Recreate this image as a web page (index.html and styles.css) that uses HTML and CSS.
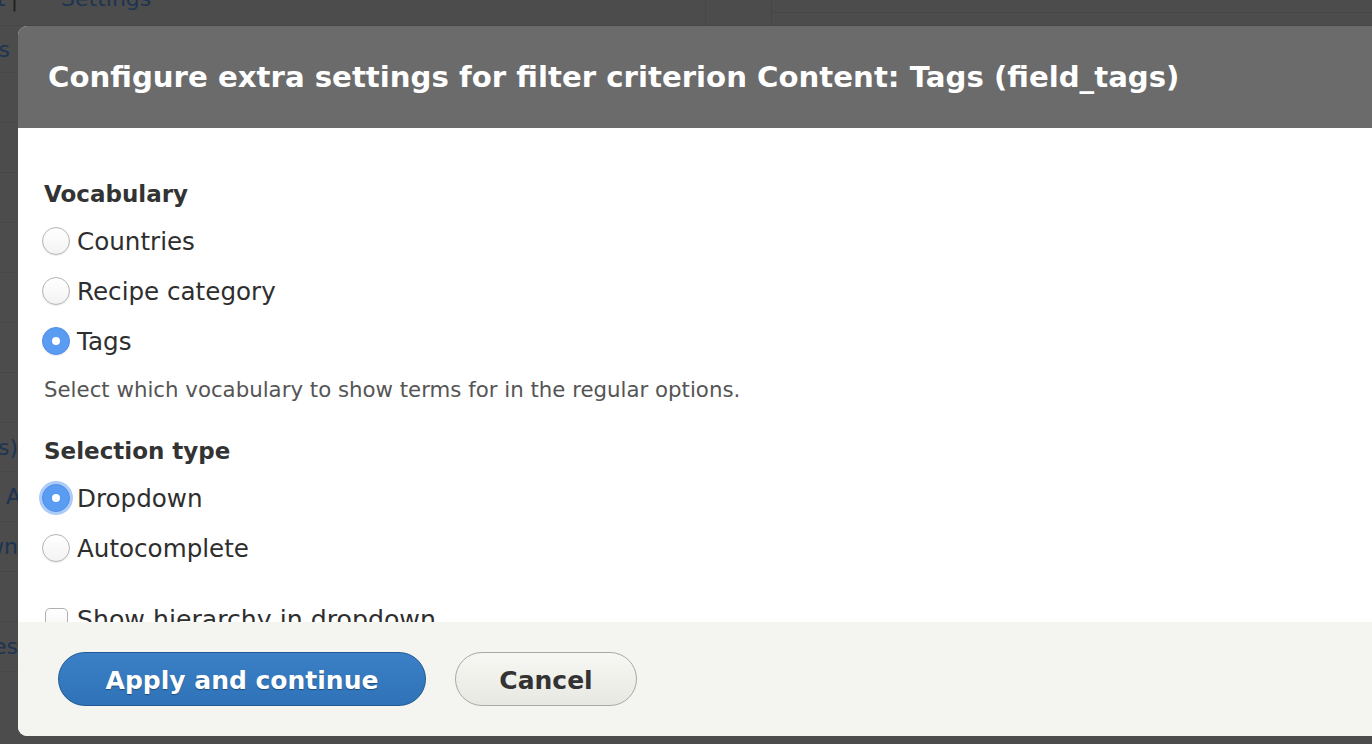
FILE: index.html
```html
<!DOCTYPE html>
<html lang="en">
<head>
<meta charset="utf-8">
<title>Configure extra settings</title>
<link rel="stylesheet" href="styles.css">
</head>
<body>
<div class="page">
  <div class="topbar">
    <div class="crumbs"><span class="c1">t</span><span class="sep">|</span><span class="c2">Settings</span></div>
    <div class="tb-cell tb-a"></div>
    <div class="tb-cell tb-b"><div class="tb-line"></div></div>
  </div>
  <div class="side">
    <div class="srow r1"><span class="st st1">Fields</span></div>
    <div class="srow"></div>
    <div class="srow"></div>
    <div class="srow"></div>
    <div class="srow"></div>
    <div class="srow"></div>
    <div class="srow"></div>
    <div class="srow"></div>
    <div class="srow r9"><span class="st">Tags)</span></div>
    <div class="srow r10"><span class="st st2">A</span></div>
    <div class="srow r11"><span class="st">Shown</span></div>
    <div class="srow r12"></div>
    <div class="srow r13"><span class="st">Values</span></div>
  </div>
</div>

<div class="dialog" role="dialog" aria-labelledby="dlg-title">
  <div class="dialog-title">
    <h1 id="dlg-title">Configure extra settings for filter criterion Content: Tags (field_tags)</h1>
  </div>
  <div class="dialog-body">
    <fieldset class="group">
      <div class="group-label">Vocabulary</div>
      <label class="opt"><input type="radio" name="voc"><span>Countries</span></label>
      <label class="opt"><input type="radio" name="voc"><span>Recipe category</span></label>
      <label class="opt"><input type="radio" name="voc" checked><span>Tags</span></label>
      <div class="desc">Select which vocabulary to show terms for in the regular options.</div>
    </fieldset>
    <fieldset class="group group2">
      <div class="group-label">Selection type</div>
      <label class="opt"><input type="radio" name="sel" class="focus" checked><span>Dropdown</span></label>
      <label class="opt"><input type="radio" name="sel"><span>Autocomplete</span></label>
    </fieldset>
    <label class="opt chk"><input type="checkbox"><span>Show hierarchy in dropdown</span></label>
  </div>
  <div class="dialog-footer">
    <button class="btn btn-primary" type="button">Apply and continue</button>
    <button class="btn btn-secondary" type="button">Cancel</button>
  </div>
</div>
</body>
</html>
```

FILE: styles.css
```css
html, body {
  margin: 0;
  padding: 0;
}
body {
  width: 1372px;
  height: 744px;
  overflow: hidden;
  background: #4c4c4c;
  font-family: "DejaVu Sans", "Noto Sans", sans-serif;
  position: relative;
}

/* background page (already dimmed by the overlay) */
.page {
  display: flex;
  flex-direction: column;
  height: 744px;
}
.topbar {
  display: flex;
  height: 26px;
  border-bottom: 1px solid #474747;
  box-sizing: border-box;
}
.crumbs {
  width: 705px;
  display: flex;
  align-items: flex-start;
  font-size: 22px;
  color: #1d3452;
  margin-top: -14px;
  white-space: nowrap;
}
.c1 { margin-left: -3px; }
.sep { margin-left: 5px; color: #222; }
.c2 { margin-left: 43px; }
.tb-cell {
  border-left: 1px solid #464646;
}
.tb-a { width: 65px; }
.tb-b { flex: 1; }
.tb-line {
  margin-top: 12px;
  border-top: 1px solid #464646;
}
.side {
  display: flex;
  flex-direction: column;
  width: 60px;
}
.srow {
  height: 49px;
  border-bottom: 1px solid #474747;
  display: flex;
  align-items: center;
  justify-content: flex-end;
  white-space: nowrap;
  font-size: 22px;
  color: #1d3452;
  overflow: visible;
}
.srow.r1 { height: 46px; }
.srow.r9 { height: 48px; }
.st { margin-right: 42px; }
.st1 { margin-right: 50px; }
.st2 { margin-right: 39px; }

/* dialog */
.dialog {
  position: absolute;
  left: 18px;
  top: 26px;
  width: 1400px;
  height: 710px;
  border-radius: 9px;
  overflow: hidden;
  display: flex;
  flex-direction: column;
  background: #fff;
}
.dialog-title {
  height: 102px;
  background: #6b6b6b;
  display: flex;
  align-items: center;
  padding-left: 30px;
  flex: none;
}
.dialog-title h1 {
  margin: 0;
  color: #fff;
  font-size: 29.2px;
  font-weight: bold;
  line-height: 1;
  padding-top: 2px;
  letter-spacing: 0;
}
.dialog-body {
  height: 494px;
  overflow: hidden;
  padding: 51px 0 0 24px;
  box-sizing: border-box;
  color: #333;
  flex: none;
}
.group {
  border: 0;
  margin: 0;
  padding: 0;
  min-width: 0;
}
.group2 { margin-top: 32px; }
.group-label {
  font-weight: bold;
  font-size: 23px;
  line-height: 30px;
  color: #333;
  padding-left: 2px;
  margin-bottom: 7px;
}
.opt {
  display: flex;
  align-items: center;
  height: 50px;
  font-size: 24.6px;
  color: #2e2e2e;
  gap: 7px;
}
.opt input {
  -webkit-appearance: none;
  appearance: none;
  margin: 0;
  flex: none;
}
.opt input[type="radio"] {
  width: 28px;
  height: 28px;
  border-radius: 50%;
  border: 1px solid #b3b3b3;
  background: linear-gradient(#ffffff, #f3f3f3);
  box-shadow: 0 1px 1px rgba(0,0,0,0.08);
  box-sizing: border-box;
  display: grid;
  place-items: center;
}
.opt input[type="radio"]:checked {
  background: #5b9cf3;
  border-color: #4f8ee8;
}
.opt input[type="radio"]:checked::after {
  content: "";
  width: 8px;
  height: 8px;
  border-radius: 50%;
  background: #fff;
}
.opt input.focus {
  box-shadow: 0 0 0 3px rgba(105, 160, 240, 0.55);
}
.desc {
  margin-top: 10px;
  font-size: 21.3px;
  line-height: 28px;
  color: #555;
  padding-left: 2px;
}
.chk {
  margin-top: 21px;
  gap: 9px;
}
.chk span { font-size: 25.2px; }
.opt input[type="checkbox"] {
  width: 23px;
  height: 23px;
  border: 1px solid #b0b0b0;
  border-radius: 5px;
  background: linear-gradient(#fff, #f4f4f4);
  margin-left: 3px;
  box-sizing: border-box;
}

.dialog-footer {
  flex: 1;
  background: #f4f4f0;
  display: flex;
  align-items: flex-start;
  gap: 29px;
  padding: 30px 0 0 40px;
}
.btn {
  font-family: "DejaVu Sans", "Noto Sans", sans-serif;
  font-weight: bold;
  font-size: 25px;
  height: 54px;
  border-radius: 28px;
  padding: 0;
  box-sizing: border-box;
  cursor: pointer;
}
.btn-primary {
  width: 368px;
  color: #fff;
  background: linear-gradient(#3b80c6, #2f72b8);
  border: 1px solid #1f5a94;
  text-shadow: 0 1px 1px rgba(0,0,0,0.35);
  padding-top: 2px;
}
.btn-secondary {
  width: 182px;
  color: #333;
  background: linear-gradient(#f7f7f3, #e8e8e3);
  border: 1px solid #a8a8a6;
  padding-top: 2px;
}
```
